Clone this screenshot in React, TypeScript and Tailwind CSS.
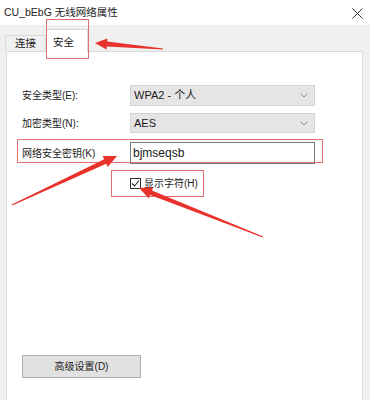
import React from 'react';

type Pt = [number, number];

// builds a tapered arrow polygon from tail to tip
function arrowPoints(tail: Pt, tip: Pt, headLen: number, headW: number, tailW: number, neckW: number) {
    const dx = tip[0] - tail[0];
    const dy = tip[1] - tail[1];
    const len = Math.hypot(dx, dy);
    const ux = dx / len;
    const uy = dy / len;
    const nx = -uy;
    const ny = ux;
    const neck: Pt = [tip[0] - ux * headLen, tip[1] - uy * headLen];
    const p = (b: Pt, w: number): string => `${b[0] + nx * w},${b[1] + ny * w}`;
    return [
        p(tail, tailW / 2),
        p(neck, neckW / 2),
        p(neck, headW / 2),
        `${tip[0]},${tip[1]}`,
        p(neck, -headW / 2),
        p(neck, -neckW / 2),
        p(tail, -tailW / 2),
    ].join(' ');
}

function Chevron() {
    return (
        <svg width="8" height="5" viewBox="0 0 8 5" className="mr-[6px]">
            <path d="M0.5 0.5 L4 4 L7.5 0.5" fill="none" stroke="#8a8a8a" strokeWidth="1" />
        </svg>
    );
}

function Select({ value }: { value: string }) {
    return (
        <div className="flex items-center justify-between w-[185px] h-full bg-[#e5e5e5] border border-[#d4d4d4] pl-[3px] text-[11px]">
            <span>{value}</span>
            <Chevron />
        </div>
    );
}

export default function App() {
    return (
        <div className="relative w-[370px] h-[400px] overflow-hidden bg-[#f0f0f0] text-[#1a1a1a] text-[10px] font-['Liberation_Sans','Noto_Sans_CJK_SC',sans-serif]">
            <div className="h-[25px] bg-white flex items-center justify-between pl-[4px] pr-[7px] pt-[1px]">
                <span className="text-[10.5px] text-[#222]">CU_bEbG 无线网络属性</span>
                <svg width="11" height="11" viewBox="0 0 11 11">
                    <path d="M0.5 0.5 L10.5 10.5 M10.5 0.5 L0.5 10.5" stroke="#333" strokeWidth="1" />
                </svg>
            </div>
            <div className="pl-[6px] pr-[7px]">
                <div className="flex items-end h-[26px]">
                    <div className="ml-[-1px] w-[41px] h-[16px] flex items-center justify-center border border-b-0 border-[#d9d9d9] bg-[#f0f0f0] text-[10.5px]">
                        连接
                    </div>
                    <div className="w-[42px] h-[23px] flex items-start pt-[5px] pl-[6px] border border-b-0 border-[#d9d9d9] bg-white relative top-[1px] text-[10.5px]">
                        安全
                    </div>
                </div>
                <div className="bg-white border border-[#d9d9d9] h-[360px] pl-[15px] pt-[33px]">
                    <div className="flex items-center h-[21px]">
                        <div className="w-[108px]">安全类型(E):</div>
                        <Select value="WPA2 - 个人" />
                    </div>
                    <div className="flex items-center h-[20px] mt-[7px]">
                        <div className="w-[108px]">加密类型(N):</div>
                        <Select value="AES" />
                    </div>
                    <div className="flex items-center h-[22px] mt-[9px]">
                        <div className="w-[108px]">网络安全密钥(K)</div>
                        <div className="w-[185px] h-full flex items-center border border-[#7a7a7a] bg-white pl-[2px] text-[12px]">
                            bjmseqsb
                        </div>
                    </div>
                    <div className="flex items-center mt-[14px] ml-[108px] h-[11px]">
                        <div className="w-[11px] h-[11px] border border-[#333] flex items-center justify-center">
                            <svg width="9" height="9" viewBox="0 0 9 9">
                                <path d="M1 4.5 L3.5 7 L8 1.5" fill="none" stroke="#222" strokeWidth="1.1" />
                            </svg>
                        </div>
                        <span className="ml-[3px]">显示字符(H)</span>
                    </div>
                    <div className="mt-[166px] w-[119px] h-[23px] bg-[#e1e1e1] border border-[#adadad] flex items-center justify-center">
                        高级设置(D)
                    </div>
                </div>
            </div>

            {/* annotation boxes */}
            <div className="absolute left-[46px] top-[19px] w-[43px] h-[40px] border border-[#e07070]" />
            <div className="absolute left-[17px] top-[139px] w-[306px] h-[24px] border border-[#e07070]" />
            <div className="absolute left-[111px] top-[170px] w-[93px] h-[27px] border border-[#e07070]" />

            {/* annotation arrows */}
            <svg className="absolute left-0 top-0 pointer-events-none" width="370" height="400">
                <polygon points={arrowPoints([163, 49], [95, 43], 12, 11, 1, 5)} fill="#e8322c" />
                <polygon points={arrowPoints([12, 205], [117, 156], 13, 12, 1, 5)} fill="#e8322c" />
                <polygon points={arrowPoints([263, 237], [139, 188], 13, 12, 1, 5)} fill="#e8322c" />
            </svg>
        </div>
    );
}
